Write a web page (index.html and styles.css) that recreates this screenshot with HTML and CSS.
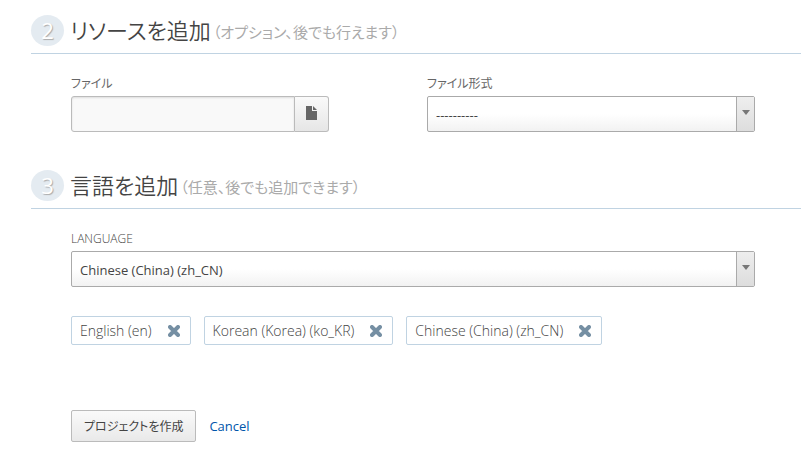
FILE: index.html
```html
<!DOCTYPE html>
<html lang="ja">
<head>
    <meta charset="UTF-8">
    <meta name="viewport" content="width=device-width, initial-scale=1.0">
    <title>プロジェクトを作成</title>
    <link rel="stylesheet" href="styles.css">
</head>
<body>
    <form class="project-form">
        <section>
            <h2><span class="step">2</span>リソースを追加 <small>（オプション、後でも行えます）</small></h2>
            <div class="fields columns">
                <div>
                    <label for="file">ファイル</label>
                    <div class="file-picker">
                        <input type="text" id="file" name="file" readonly>
                        <button type="button" aria-label="ファイル">
                            <svg width="11" height="14" viewBox="0 0 11 14"><path d="M0 0h6v5h5v9H0z M7 0l4 4H7z" fill="#666"/></svg>
                        </button>
                    </div>
                </div>
                <div>
                    <label for="format">ファイル形式</label>
                    <div class="select">
                        <select id="format" name="format">
                            <option>----------</option>
                        </select>
                    </div>
                </div>
            </div>
        </section>

        <section>
            <h2><span class="step">3</span>言語を追加 <small>（任意、後でも追加できます）</small></h2>
            <div class="fields">
                <label for="language" class="light">LANGUAGE</label>
                <div class="select">
                    <select id="language" name="language">
                        <option>Chinese (China) (zh_CN)</option>
                    </select>
                </div>
                <ul class="languages">
                    <li>English (en)
                        <button type="button" aria-label="Remove English (en)"><svg width="12" height="12" viewBox="0 0 12 12"><path d="M2 2l8 8M10 2l-8 8"/></svg></button>
                    </li>
                    <li>Korean (Korea) (ko_KR)
                        <button type="button" aria-label="Remove Korean (Korea) (ko_KR)"><svg width="12" height="12" viewBox="0 0 12 12"><path d="M2 2l8 8M10 2l-8 8"/></svg></button>
                    </li>
                    <li>Chinese (China) (zh_CN)
                        <button type="button" aria-label="Remove Chinese (China) (zh_CN)"><svg width="12" height="12" viewBox="0 0 12 12"><path d="M2 2l8 8M10 2l-8 8"/></svg></button>
                    </li>
                </ul>
            </div>
        </section>

        <div class="actions">
            <button type="submit">プロジェクトを作成</button>
            <a href="#">Cancel</a>
        </div>
    </form>
</body>
</html>
```
FILE: styles.css
```css
*, *::before, *::after {
    box-sizing: border-box;
}

body {
    margin: 0;
    background: #fff;
    color: #444;
    font-family: "Open Sans", "Noto Sans CJK JP", sans-serif;
    font-size: 13px;
    font-feature-settings: "palt";
}

input, select, button {
    font: inherit;
    font-feature-settings: inherit;
    color: inherit;
}

.project-form {
    padding: 15px 0 24px 31px;
}

h2 {
    display: flex;
    align-items: center;
    height: 39px;
    margin: 0;
    padding-bottom: 7px;
    border-bottom: 1px solid #c0d3e2;
    font-size: 22px;
    font-weight: 350;
    line-height: 31px;
    white-space: nowrap;
}

h2 small {
    margin-left: 2px;
    padding-top: 4px;
    color: #aaa;
    font-size: 15px;
    font-weight: 400;
}

.step {
    width: 33px;
    height: 31px;
    margin-right: 6px;
    border-radius: 50%;
    background: #e4ebf1;
    color: #fff;
    font-weight: 400;
    text-align: center;
    text-shadow: 1px 1px 1px #aaa;
}

.fields {
    padding: 20px 46px 0 40px;
}

.columns {
    display: grid;
    grid-template-columns: 1fr 1fr;
    gap: 28px;
    margin-bottom: 38px;
}

label {
    display: block;
    height: 22px;
    color: #666;
    font-size: 12px;
    line-height: 20px;
}

label.light {
    color: #444;
    font-weight: 300;
}

.file-picker {
    display: flex;
    max-width: 258px;
    height: 36px;
}

.file-picker input {
    flex: 1;
    min-width: 0;
    border: 1px solid #bbb;
    border-radius: 3px 0 0 3px;
    background: #f9f9f9;
    box-shadow: inset 0 1px 2px #ddd;
}

.file-picker button {
    width: 34px;
    padding: 2px 0 0;
    border: 1px solid #bbb;
    border-left: 0;
    border-radius: 0 3px 3px 0;
    background: linear-gradient(#fafafa, #e6e6e6);
}

.select {
    position: relative;
}

.select select {
    display: block;
    appearance: none;
    width: 100%;
    height: 36px;
    padding: 2px 28px 0 8px;
    border: 1px solid #aaa;
    border-radius: 2px;
    background: linear-gradient(#fff 50%, #f2f2f2);
}

.select::before {
    content: "";
    position: absolute;
    top: 1px;
    right: 1px;
    bottom: 1px;
    width: 18px;
    border-left: 1px solid #aaa;
    background: linear-gradient(#eee, #ddd);
    pointer-events: none;
}

.select::after {
    content: "";
    position: absolute;
    top: 14px;
    right: 5px;
    border: 4px solid transparent;
    border-top: 5px solid #777;
    border-bottom: 0;
    pointer-events: none;
}

.languages {
    display: flex;
    flex-wrap: wrap;
    gap: 13px;
    margin: 29px 0 0;
    padding: 0;
    list-style: none;
}

.languages li {
    display: flex;
    align-items: center;
    gap: 16px;
    height: 29px;
    padding: 0 10px 0 8px;
    border: 1px solid #c0d3e2;
    border-radius: 2px;
    font-size: 14px;
    font-weight: 300;
}

.languages button {
    display: flex;
    padding: 1px 0 0;
    border: 0;
    background: none;
}

.languages path {
    fill: none;
    stroke: #758fa3;
    stroke-width: 4;
    stroke-linecap: round;
}

.actions {
    display: flex;
    align-items: center;
    gap: 13px;
    margin: 65px 0 0 40px;
}

.actions button {
    height: 32px;
    padding: 0 12px;
    border: 1px solid #bbb;
    border-radius: 2px;
    background: linear-gradient(#fafafa, #e9e9e9);
    font-size: 12px;
}

.actions a {
    color: #0055aa;
    font-weight: 500;
    text-decoration: none;
}
```
